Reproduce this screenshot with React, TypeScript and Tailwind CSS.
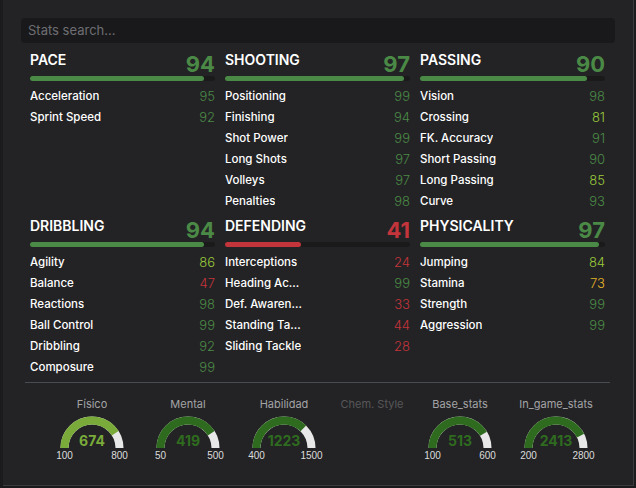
import React from "react";

type Stat = { label: string; value: number };
type Category = { name: string; value: number; stats: Stat[] };

const categories: Category[] = [
  {
    name: "PACE",
    value: 94,
    stats: [
      { label: "Acceleration", value: 95 },
      { label: "Sprint Speed", value: 92 },
    ],
  },
  {
    name: "SHOOTING",
    value: 97,
    stats: [
      { label: "Positioning", value: 99 },
      { label: "Finishing", value: 94 },
      { label: "Shot Power", value: 99 },
      { label: "Long Shots", value: 97 },
      { label: "Volleys", value: 97 },
      { label: "Penalties", value: 98 },
    ],
  },
  {
    name: "PASSING",
    value: 90,
    stats: [
      { label: "Vision", value: 98 },
      { label: "Crossing", value: 81 },
      { label: "FK. Accuracy", value: 91 },
      { label: "Short Passing", value: 90 },
      { label: "Long Passing", value: 85 },
      { label: "Curve", value: 93 },
    ],
  },
  {
    name: "DRIBBLING",
    value: 94,
    stats: [
      { label: "Agility", value: 86 },
      { label: "Balance", value: 47 },
      { label: "Reactions", value: 98 },
      { label: "Ball Control", value: 99 },
      { label: "Dribbling", value: 92 },
      { label: "Composure", value: 99 },
    ],
  },
  {
    name: "DEFENDING",
    value: 41,
    stats: [
      { label: "Interceptions", value: 24 },
      { label: "Heading Accuracy", value: 99 },
      { label: "Def. Awareness", value: 33 },
      { label: "Standing Tackle", value: 44 },
      { label: "Sliding Tackle", value: 28 },
    ],
  },
  {
    name: "PHYSICALITY",
    value: 97,
    stats: [
      { label: "Jumping", value: 84 },
      { label: "Stamina", value: 73 },
      { label: "Strength", value: 99 },
      { label: "Aggression", value: 99 },
    ],
  },
];

const gauges = [
  { title: "Físico", value: 674, min: 100, max: 800, color: "#7aab3a" },
  { title: "Mental", value: 419, min: 50, max: 500, color: "#2f6b1f" },
  { title: "Habilidad", value: 1223, min: 400, max: 1500, color: "#2f6b1f" },
  { title: "Chem. Style", value: 0, min: 0, max: 0, color: "" },
  { title: "Base_stats", value: 513, min: 100, max: 600, color: "#2f6b1f" },
  { title: "In_game_stats", value: 2413, min: 200, max: 2800, color: "#2f6b1f" },
];

function valueColor(v: number) {
  if (v >= 88) return "text-[#4b8a46]";
  if (v >= 80) return "text-[#9ccb3b]";
  if (v >= 60) return "text-[#e6b325]";
  return "text-[#c3343b]";
}

const CategoryBlock: React.FC<{ cat: Category }> = ({ cat }) => {
  const good = cat.value >= 50;
  return (
    <div className="flex flex-col">
      <div className="flex justify-between items-start h-[25px]">
        <span className="text-[14px] leading-[20px] font-semibold text-white -mt-[1px]">
          {cat.name}
        </span>
        <span
          className={`text-[22px] leading-[22px] font-bold mt-[2px] ${
            good ? "text-[#4b8a46]" : "text-[#c3343b]"
          }`}
        >
          {cat.value}
        </span>
      </div>
      <div className="h-[5px] rounded-full bg-[#1a1a1b]">
        <div
          className={`h-full rounded-full ${good ? "bg-[#4b8a46]" : "bg-[#c3343b]"}`}
          style={{ width: `${cat.value}%` }}
        />
      </div>
      <div className="mt-[6px] flex flex-col">
        {cat.stats.map((s) => (
          <div key={s.label} className="flex justify-between items-center h-[21px]">
            <span className="text-[11.5px] font-medium text-white truncate max-w-[80px]">
              {s.label}
            </span>
            <span className={`text-[13px] font-light ${valueColor(s.value)}`}>{s.value}</span>
          </div>
        ))}
      </div>
    </div>
  );
};

const Gauge: React.FC<{ g: (typeof gauges)[number] }> = ({ g }) => {
  const empty = g.max === 0;
  const f = empty ? 0 : (g.value - g.min) / (g.max - g.min);
  const a = Math.PI * (1 - f);
  const r = 27.5;
  const x = 32 + r * Math.cos(a);
  const y = 32 - r * Math.sin(a);
  return (
    <div className={`flex flex-col items-center ${empty ? "w-[80px]" : "w-[96px]"}`}>
      <span
        className={`text-[11px] leading-[16px] whitespace-nowrap overflow-hidden max-w-[80px] ${
          empty ? "text-[#575759]" : "text-[#a3a3a5]"
        }`}
      >
        {g.title}
      </span>
      <div className="relative w-[64px] h-[33px] mt-[4px]">
        {!empty && (
          <svg width="64" height="33" viewBox="0 0 64 33">
            <path d="M 4.5 32 A 27.5 27.5 0 0 1 59.5 32" fill="none" stroke="#e8e8e8" strokeWidth="8" />
            <path
              d={`M 4.5 32 A 27.5 27.5 0 0 1 ${x.toFixed(2)} ${y.toFixed(2)}`}
              fill="none"
              stroke={g.color}
              strokeWidth="8"
            />
          </svg>
        )}
        {!empty && (
          <span
            className="absolute inset-x-0 bottom-0 text-center text-[14px] leading-[16px] font-bold"
            style={{ color: g.color }}
          >
            {g.value}
          </span>
        )}
        {!empty && (
          <>
            <span className="absolute left-[4.5px] top-[34px] -translate-x-1/2 text-[10px] leading-[11px] text-[#dcdcdc] font-['Liberation_Sans',sans-serif]">
              {g.min}
            </span>
            <span className="absolute left-[59.5px] top-[34px] -translate-x-1/2 text-[10px] leading-[11px] text-[#dcdcdc] font-['Liberation_Sans',sans-serif]">
              {g.max}
            </span>
          </>
        )}
      </div>
    </div>
  );
};

export default function App() {
  return (
    <div className="w-[636px] h-[488px] bg-[#1b1b1d] font-['Inter',sans-serif] overflow-hidden">
      <div className="ml-[3px] w-[631px] h-[486px] bg-[#232325] border-r border-b border-[#3b3b3e] pt-[17px]">
        <div className="pl-[18px] pr-[16px]">
          <input
            placeholder="Stats search..."
            className="w-[594px] h-[25px] rounded-[4px] bg-[#19191b] px-[7px] text-[13px] text-white placeholder:text-[#6e6e72] outline-none"
          />
        </div>
        <div className="grid grid-cols-[185px_185px_185px] gap-x-[10px] gap-y-[4px] pl-[27px] mt-[8px]">
          {categories.map((c) => (
            <CategoryBlock key={c.name} cat={c} />
          ))}
        </div>
        <div className="ml-[22px] w-[585px] h-px bg-[#474c53] mt-[3px]" />
        <div className="flex pl-[41px] mt-[13px]">
          {gauges.map((g) => (
            <Gauge key={g.title} g={g} />
          ))}
        </div>
      </div>
    </div>
  );
}
